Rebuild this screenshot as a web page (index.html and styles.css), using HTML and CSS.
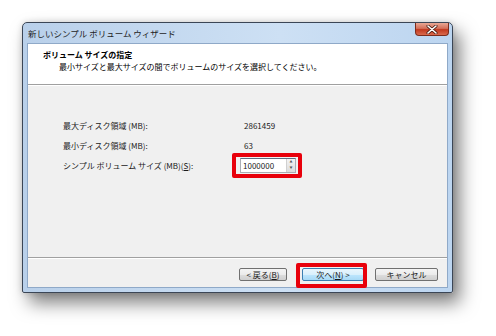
FILE: index.html
```html
<!DOCTYPE html>
<html lang="ja">

<head>
    <meta charset="UTF-8">
    <title>新しいシンプル ボリューム ウィザード</title>
    <link rel="stylesheet" href="styles.css">
</head>

<body>
    <div class="window">
        <div class="titlebar">
            <span class="title">新しいシンプル ボリューム ウィザード</span>
            <div class="close-btn">
                <svg width="12" height="9" viewBox="0 0 12 9">
                    <path d="M2 1 L10 8 M10 1 L2 8" stroke="#4a1a10" stroke-width="3" stroke-linecap="round"/>
                    <path d="M2 1 L10 8 M10 1 L2 8" stroke="#ffffff" stroke-width="1.6" stroke-linecap="round"/>
                </svg>
            </div>
        </div>
        <div class="client">
            <div class="header">
                <p class="header-title">ボリューム サイズの指定</p>
                <p class="header-sub">最小サイズと最大サイズの間でボリュームのサイズを選択してください。</p>
            </div>
            <div class="content">
                <div class="rows">
                    <span class="label">最大ディスク領域 (MB):</span>
                    <span class="value">2861459</span>
                    <span class="label">最小ディスク領域 (MB):</span>
                    <span class="value">63</span>
                    <span class="label">シンプル ボリューム サイズ (MB)(<u>S</u>):</span>
                    <div class="spin marked">
                        <span class="spin-text">1000000</span>
                        <div class="spin-arrows">
                            <span class="arrow">▲</span>
                            <span class="arrow">▼</span>
                        </div>
                    </div>
                </div>
            </div>
            <div class="footer">
                <button class="btn back-btn">&lt; 戻る(<u>B</u>)</button>
                <button class="btn next-btn marked-btn">次へ(<u>N</u>) &gt;</button>
                <button class="btn cancel-btn">キャンセル</button>
            </div>
        </div>
    </div>
</body>

</html>
```

FILE: styles.css
```css
body {
    margin: 0;
    background-color: #ffffff;
    font-family: "Noto Sans CJK JP", "Noto Sans", sans-serif;
    width: 496px;
    height: 336px;
    overflow: hidden;
}

.window {
    margin: 22px 0 0 22px;
    width: 431px;
    height: 271px;
    box-sizing: border-box;
    border: 1px solid #3b4656;
    border-radius: 5px 5px 2px 2px;
    background: linear-gradient(to right, #b9d0ea, #cde0f4 60%, #bcd5f0);
    box-shadow: 7px 10px 18px rgba(0, 0, 0, 0.5), 0 0 6px rgba(0, 0, 0, 0.15);
    padding: 0 4px 4px 4px;
    display: flex;
    flex-direction: column;
}

.titlebar {
    height: 20px;
    display: flex;
    align-items: center;
    justify-content: space-between;
}

.title {
    font-size: 8.5px;
    color: #1e1e1e;
    margin-left: 1px;
    margin-top: -1px;
}

.close-btn {
    align-self: flex-start;
    width: 32px;
    height: 12px;
    margin-right: -1px;
    border: 1px solid #7d2c1c;
    border-top: none;
    border-radius: 0 0 4px 4px;
    background: linear-gradient(to bottom, #e9a895, #d4705a 45%, #c2391f 55%, #d96a4e);
    display: flex;
    align-items: center;
    justify-content: center;
}

.client {
    flex: 1;
    background-color: #f0f0f0;
    border: 1px solid #8fa9c8;
    display: flex;
    flex-direction: column;
}

.header {
    height: 41px;
    background-color: #ffffff;
    border-bottom: 1px solid #a0a0a0;
    box-shadow: 0 1px 0 #ffffff;
    padding-left: 15px;
    padding-top: 5px;
    box-sizing: border-box;
}

.header p {
    margin: 0;
    font-size: 8px;
    line-height: 12px;
    color: #000000;
}

.header-title {
    font-weight: bold;
}

.header-sub {
    padding-left: 16px;
}

.content {
    flex: 1;
    padding: 30px 0 0 35px;
}

.rows {
    display: grid;
    grid-template-columns: 177px auto;
    grid-auto-rows: 20px;
    align-items: center;
    font-size: 8px;
    color: #1a1a1a;
}

.value {
    padding-left: 4px;
}

.spin {
    width: 56px;
    height: 15px;
    box-sizing: border-box;
    border: 1px solid #abadb3;
    border-top-color: #5d6d82;
    background-color: #ffffff;
    display: flex;
    align-items: center;
    justify-content: space-between;
}

.spin-text {
    padding-left: 2px;
}

.spin-arrows {
    width: 8px;
    height: 13px;
    display: flex;
    flex-direction: column;
    background: linear-gradient(to bottom, #f3f3f3, #dcdcdc);
    border-left: 1px solid #d0d0d0;
}

.arrow {
    flex: 1;
    font-size: 3px;
    line-height: 6px;
    text-align: center;
    color: #555555;
}

.marked {
    position: relative;
}

.marked::after {
    content: "";
    position: absolute;
    top: -6px;
    left: -9px;
    right: -7px;
    bottom: -6px;
    border: 4px solid #e8000b;
    border-radius: 2px;
}

.footer {
    height: 30px;
    border-top: 1px solid #a0a0a0;
    box-shadow: inset 0 1px 0 #ffffff;
    display: flex;
    justify-content: flex-end;
    align-items: flex-start;
    padding: 10px 9px 0 0;
    box-sizing: border-box;
}

.btn {
    height: 13px;
    padding: 0;
    font-family: inherit;
    font-size: 8px;
    line-height: 11px;
    color: #1a1a1a;
    border: 1px solid #707070;
    border-radius: 2px;
    background: linear-gradient(to bottom, #f4f4f4, #ebebeb 50%, #dddddd 51%, #cfcfcf);
}

.back-btn {
    width: 48px;
}

.next-btn {
    width: 62px;
    margin-left: 15px;
    border-color: #3c7fb1;
    background: linear-gradient(to bottom, #eaf6fd, #d9f0fc 50%, #bee6fd 51%, #a7d9f5);
}

.cancel-btn {
    width: 63px;
    margin-left: 11px;
}

.marked-btn {
    position: relative;
}

.marked-btn::after {
    content: "";
    position: absolute;
    top: -6px;
    left: -7px;
    right: -4px;
    bottom: -8px;
    border: 4px solid #e8000b;
    border-radius: 2px;
}
```
